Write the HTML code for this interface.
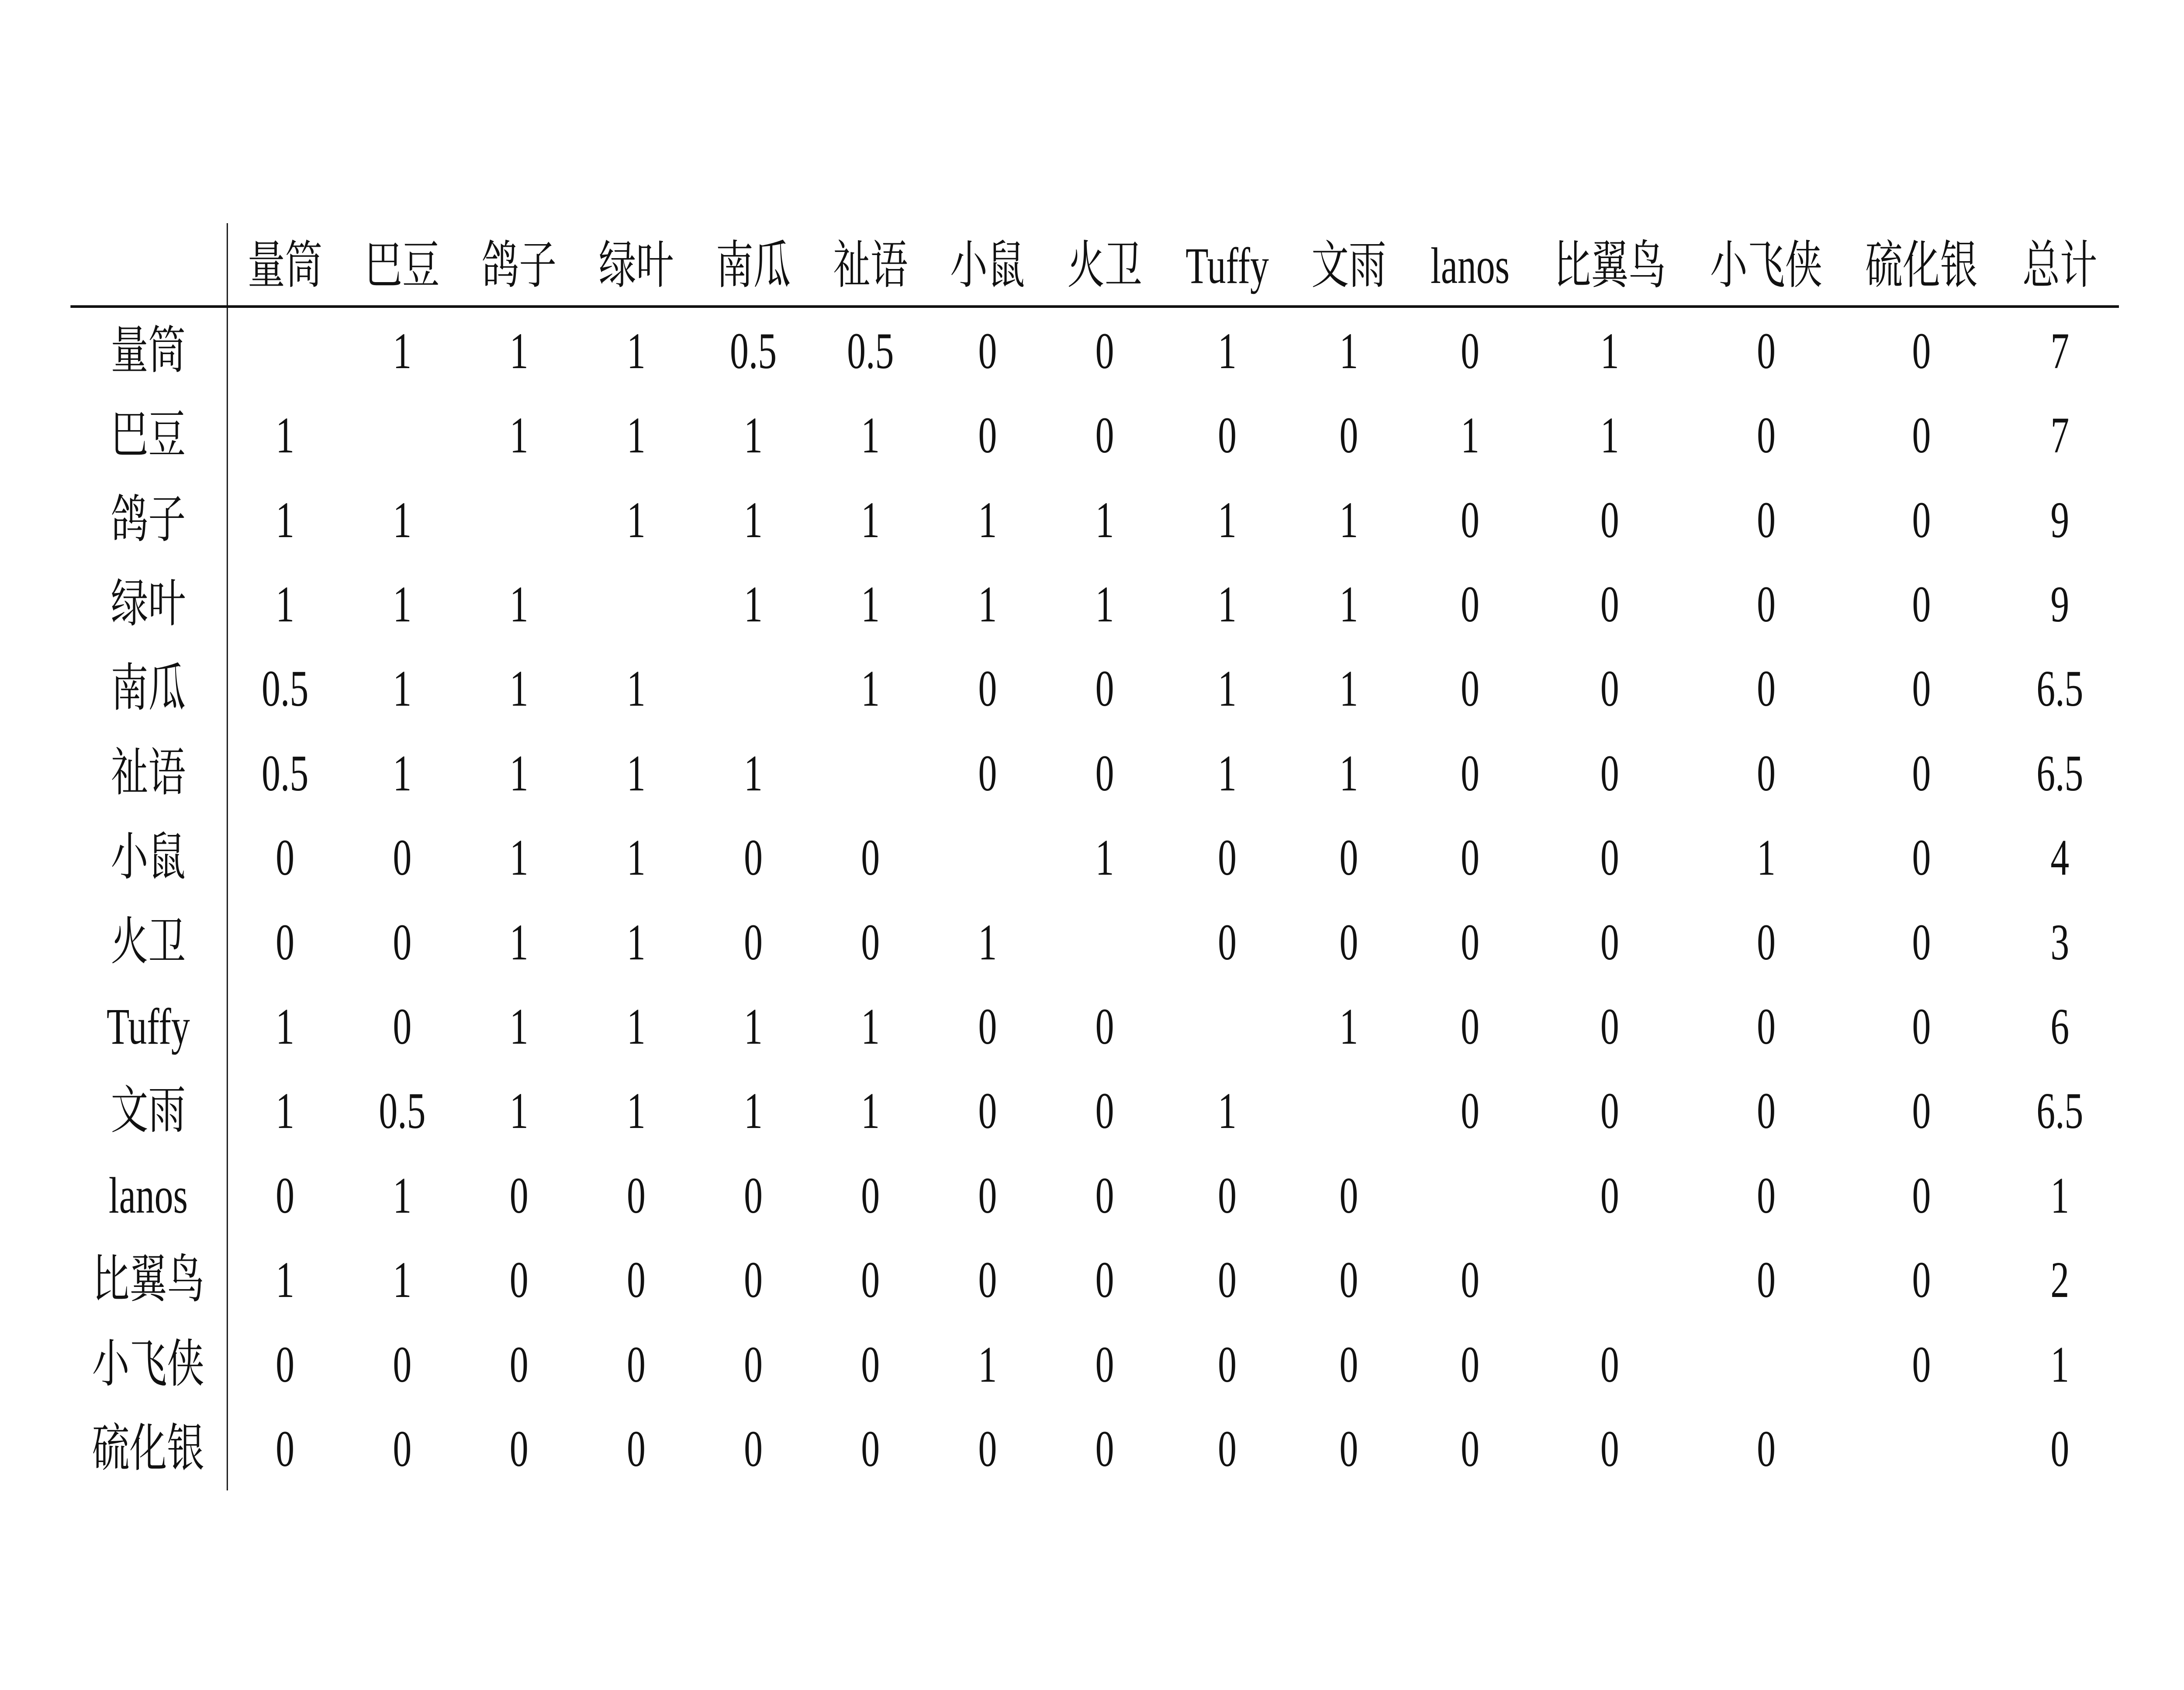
<!DOCTYPE html>
<html><head><meta charset="utf-8"><style>
html,body{margin:0;padding:0;background:#fff;width:100vw;height:100vh;overflow:hidden}
svg{display:block;width:100vw;height:100vh}
text{font-family:"Liberation Serif","Noto Serif CJK SC",serif;font-size:118px;fill:#111;text-anchor:middle;dominant-baseline:central}
</style></head><body>
<svg viewBox="0 0 6880 3870" preserveAspectRatio="none" xmlns="http://www.w3.org/2000/svg">
<rect x="0" y="0" width="6880" height="3870" fill="#fff"/>
<rect x="714" y="511" width="4" height="2902" fill="#111"/>
<rect x="222" y="699" width="6453" height="6" fill="#111"/>
<g transform="translate(0,609)"><text x="898">量筒</text><text x="1267">巴豆</text><text x="1635">鸽子</text><text x="2004">绿叶</text><text x="2373">南瓜</text><text x="2742">祉语</text><text x="3111">小鼠</text><text x="3480">火卫</text><text x="3866">Tuffy</text><text x="4249">文雨</text><text x="4631">lanos</text><text x="5071">比翼鸟</text><text x="5564">小飞侠</text><text x="6053">硫化银</text><text x="6489">总计</text></g>
<g transform="translate(0,804)"><text x="467">量筒</text><text x="1267">1</text><text x="1635">1</text><text x="2004">1</text><text x="2373">0.5</text><text x="2742">0.5</text><text x="3111">0</text><text x="3480">0</text><text x="3866">1</text><text x="4249">1</text><text x="4631">0</text><text x="5071">1</text><text x="5564">0</text><text x="6053">0</text><text x="6489">7</text></g>
<g transform="translate(0,997)"><text x="467">巴豆</text><text x="898">1</text><text x="1635">1</text><text x="2004">1</text><text x="2373">1</text><text x="2742">1</text><text x="3111">0</text><text x="3480">0</text><text x="3866">0</text><text x="4249">0</text><text x="4631">1</text><text x="5071">1</text><text x="5564">0</text><text x="6053">0</text><text x="6489">7</text></g>
<g transform="translate(0,1191)"><text x="467">鸽子</text><text x="898">1</text><text x="1267">1</text><text x="2004">1</text><text x="2373">1</text><text x="2742">1</text><text x="3111">1</text><text x="3480">1</text><text x="3866">1</text><text x="4249">1</text><text x="4631">0</text><text x="5071">0</text><text x="5564">0</text><text x="6053">0</text><text x="6489">9</text></g>
<g transform="translate(0,1384)"><text x="467">绿叶</text><text x="898">1</text><text x="1267">1</text><text x="1635">1</text><text x="2373">1</text><text x="2742">1</text><text x="3111">1</text><text x="3480">1</text><text x="3866">1</text><text x="4249">1</text><text x="4631">0</text><text x="5071">0</text><text x="5564">0</text><text x="6053">0</text><text x="6489">9</text></g>
<g transform="translate(0,1577)"><text x="467">南瓜</text><text x="898">0.5</text><text x="1267">1</text><text x="1635">1</text><text x="2004">1</text><text x="2742">1</text><text x="3111">0</text><text x="3480">0</text><text x="3866">1</text><text x="4249">1</text><text x="4631">0</text><text x="5071">0</text><text x="5564">0</text><text x="6053">0</text><text x="6489">6.5</text></g>
<g transform="translate(0,1771)"><text x="467">祉语</text><text x="898">0.5</text><text x="1267">1</text><text x="1635">1</text><text x="2004">1</text><text x="2373">1</text><text x="3111">0</text><text x="3480">0</text><text x="3866">1</text><text x="4249">1</text><text x="4631">0</text><text x="5071">0</text><text x="5564">0</text><text x="6053">0</text><text x="6489">6.5</text></g>
<g transform="translate(0,1964)"><text x="467">小鼠</text><text x="898">0</text><text x="1267">0</text><text x="1635">1</text><text x="2004">1</text><text x="2373">0</text><text x="2742">0</text><text x="3480">1</text><text x="3866">0</text><text x="4249">0</text><text x="4631">0</text><text x="5071">0</text><text x="5564">1</text><text x="6053">0</text><text x="6489">4</text></g>
<g transform="translate(0,2158)"><text x="467">火卫</text><text x="898">0</text><text x="1267">0</text><text x="1635">1</text><text x="2004">1</text><text x="2373">0</text><text x="2742">0</text><text x="3111">1</text><text x="3866">0</text><text x="4249">0</text><text x="4631">0</text><text x="5071">0</text><text x="5564">0</text><text x="6053">0</text><text x="6489">3</text></g>
<g transform="translate(0,2351)"><text x="467">Tuffy</text><text x="898">1</text><text x="1267">0</text><text x="1635">1</text><text x="2004">1</text><text x="2373">1</text><text x="2742">1</text><text x="3111">0</text><text x="3480">0</text><text x="4249">1</text><text x="4631">0</text><text x="5071">0</text><text x="5564">0</text><text x="6053">0</text><text x="6489">6</text></g>
<g transform="translate(0,2544)"><text x="467">文雨</text><text x="898">1</text><text x="1267">0.5</text><text x="1635">1</text><text x="2004">1</text><text x="2373">1</text><text x="2742">1</text><text x="3111">0</text><text x="3480">0</text><text x="3866">1</text><text x="4631">0</text><text x="5071">0</text><text x="5564">0</text><text x="6053">0</text><text x="6489">6.5</text></g>
<g transform="translate(0,2738)"><text x="467">lanos</text><text x="898">0</text><text x="1267">1</text><text x="1635">0</text><text x="2004">0</text><text x="2373">0</text><text x="2742">0</text><text x="3111">0</text><text x="3480">0</text><text x="3866">0</text><text x="4249">0</text><text x="5071">0</text><text x="5564">0</text><text x="6053">0</text><text x="6489">1</text></g>
<g transform="translate(0,2931)"><text x="467">比翼鸟</text><text x="898">1</text><text x="1267">1</text><text x="1635">0</text><text x="2004">0</text><text x="2373">0</text><text x="2742">0</text><text x="3111">0</text><text x="3480">0</text><text x="3866">0</text><text x="4249">0</text><text x="4631">0</text><text x="5564">0</text><text x="6053">0</text><text x="6489">2</text></g>
<g transform="translate(0,3125)"><text x="467">小飞侠</text><text x="898">0</text><text x="1267">0</text><text x="1635">0</text><text x="2004">0</text><text x="2373">0</text><text x="2742">0</text><text x="3111">1</text><text x="3480">0</text><text x="3866">0</text><text x="4249">0</text><text x="4631">0</text><text x="5071">0</text><text x="6053">0</text><text x="6489">1</text></g>
<g transform="translate(0,3318)"><text x="467">硫化银</text><text x="898">0</text><text x="1267">0</text><text x="1635">0</text><text x="2004">0</text><text x="2373">0</text><text x="2742">0</text><text x="3111">0</text><text x="3480">0</text><text x="3866">0</text><text x="4249">0</text><text x="4631">0</text><text x="5071">0</text><text x="5564">0</text><text x="6489">0</text></g>
</svg>
</body></html>
